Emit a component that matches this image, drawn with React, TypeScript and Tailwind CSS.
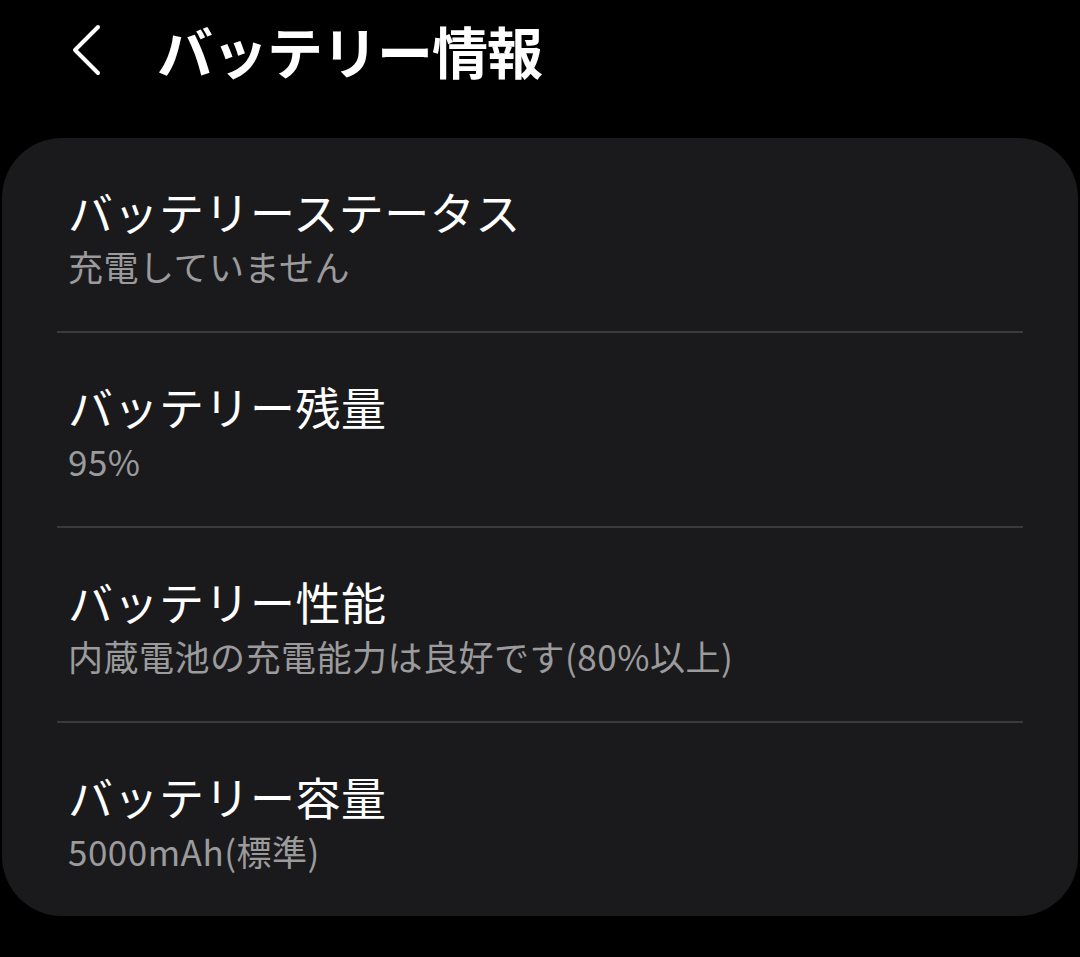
import { Fragment } from 'react';

const rows = [
  { title: 'バッテリーステータス', value: '充電していません' },
  { title: 'バッテリー残量', value: '95%' },
  { title: 'バッテリー性能', value: '内蔵電池の充電能力は良好です(80%以上)' },
  { title: 'バッテリー容量', value: '5000mAh(標準)' },
];

function BackIcon() {
  return (
    <svg width="32" height="54" viewBox="0 0 32 54" fill="none">
      <path
        d="M27 4 L4 27 L27 50"
        stroke="#ffffff"
        strokeWidth="4"
        strokeLinecap="round"
        strokeLinejoin="round"
      />
    </svg>
  );
}

export default function App() {
  return (
    <div
      className="min-h-[957px] w-[1080px] bg-black text-white"
      style={{ fontFamily: '"Noto Sans CJK JP", "Noto Sans", sans-serif' }}
    >
      {/* ヘッダー */}
      <header className="flex h-[138px] items-start">
        <div className="flex h-[100px] items-center">
          <div className="ml-[71px] flex items-center">
            <BackIcon />
          </div>
          <h1 className="ml-[54px] text-[56px] font-bold leading-none tracking-[-1px]">
            バッテリー情報
          </h1>
        </div>
      </header>

      {/* 情報カード */}
      <section className="mx-[2px] h-[778px] rounded-[60px] bg-[#1a1a1c]">
        {rows.map((row, i) => (
          <Fragment key={row.title}>
            {i > 0 && <div className="mx-[55px] h-[2px] bg-[#3a3a3c]" />}
            <div className="h-[193px] px-[66px] pt-[45px]">
              <p className="text-[45px] leading-[58px] text-white tracking-[0.5px]">
                {row.title}
              </p>
              <p className="mt-[2px] text-[35px] leading-[46px] tracking-[0.5px] text-[#9b9b9d]">
                {row.value}
              </p>
            </div>
          </Fragment>
        ))}
      </section>
    </div>
  );
}
